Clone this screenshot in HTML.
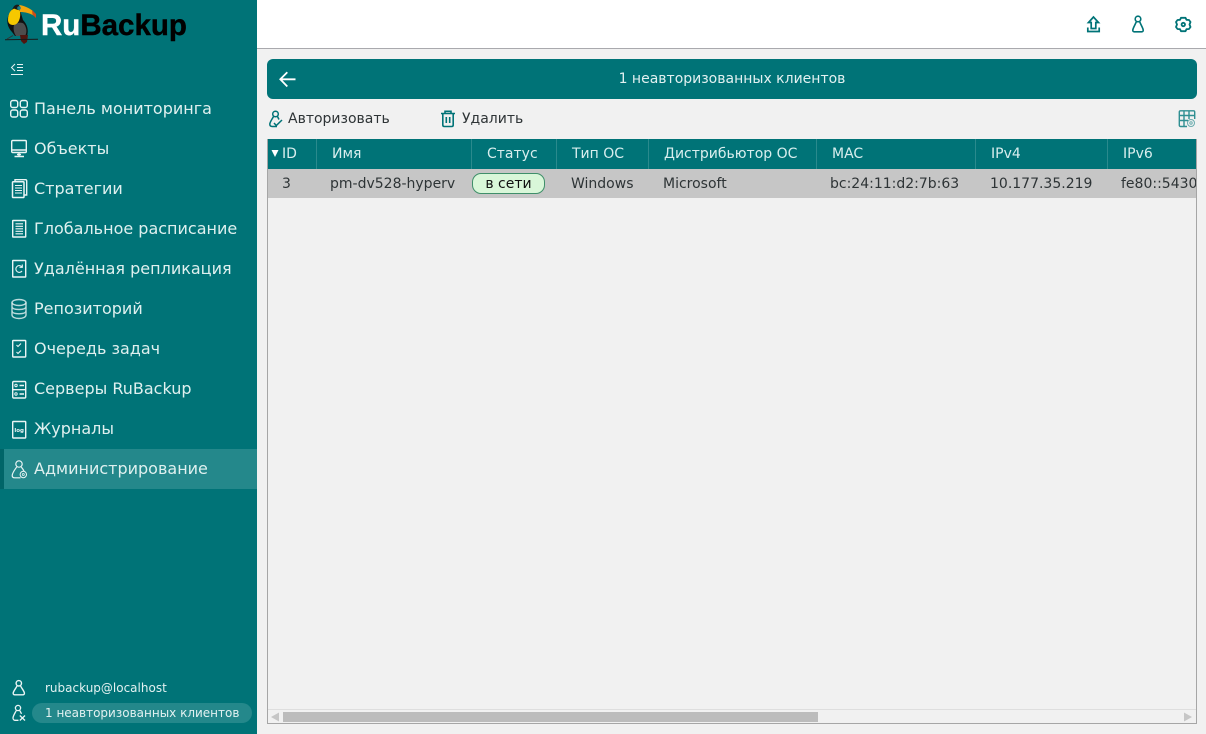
<!DOCTYPE html>
<html><head><meta charset="utf-8">
<style>
*{box-sizing:border-box}
html,body{margin:0;padding:0;width:1206px;height:734px;overflow:hidden;background:#f1f1f1;font-family:"DejaVu Sans",sans-serif}
.a{position:absolute;white-space:nowrap}
#side{position:absolute;left:0;top:0;width:257px;height:734px;background:#007377}
.mi{position:absolute;left:34px;color:#dff0ef;font-size:16px;line-height:20px;white-space:nowrap}
.ic{position:absolute;left:10px;width:18px;height:20px;fill:none;stroke:#eaf5f5;stroke-width:1.4}
.th{position:absolute;top:146px;color:#d8eeee;font-size:14px;line-height:16px;white-space:nowrap}
.td{position:absolute;top:176px;color:#2e3436;font-size:14px;line-height:16px;white-space:nowrap}
.sep{position:absolute;top:139px;width:1px;height:30px;background:#2a8a8d}
svg{position:absolute;overflow:visible}
</style></head><body>
<div id="side">
<svg style="left:0;top:0" width="40" height="46" viewBox="0 0 40 46">
<path d="M9 14C6 20 7 27 12 32L15 36 27 36C29 30 27 24 23 20L20 10 13 8Z" fill="#111"/>
<path d="M14 25C18 22 22 22 24 24C27 28 27 33 25 36H16C14 33 13 29 14 25Z" fill="#4d4d4d"/>
<path d="M8 20C8 13 11 9 16 8L20 11C21 17 19 25 13 25C10 25 8 23 8 20Z" fill="#f6c800"/>
<path d="M18 5C23 5 29 8 33 11L36 17C30 13 25 12 20 12Z" fill="#f2a60c"/>
<path d="M32 10L36 14 36 18 32.500 14.500Z" fill="#cf4a18"/>
<path d="M13 8C14 5 17 4 19 5L20 7 18 10 15 9Z" fill="#1a1a1a"/>
<circle cx="19" cy="8" r="1.800" fill="#1c7f8a"/>
<path d="M20 35H28L27 42 24 44 21 41Z" fill="#4f1610"/>
<path d="M5 39.700L38 39.200" stroke="#1a1a1a" stroke-width="1" fill="none"/>
<path d="M7 39L13 35.500" stroke="#333" stroke-width="1" fill="none"/>
</svg>
<div class="a" style="left:41px;top:7px;font:bold 29.5px/38px 'Liberation Sans',sans-serif;color:#fff;-webkit-text-stroke:.4px #fff">Ru<span style="color:#000;-webkit-text-stroke:.4px #000">Backup</span></div>
<svg style="left:10px;top:62px" width="14" height="14" fill="none" stroke="#e6f3f3" stroke-width="1"><path d="M5 2L1.500 5.500 5 9M7 2.500H13M7 5.500H13M7 8.500H13M1 12.500H13"/></svg>

<svg class="ic" style="top:99px"><rect x=".7" y="1.500" width="7" height="7" rx="2"/><rect x="10.300" y="1.500" width="7" height="7" rx="2"/><rect x=".7" y="11" width="7" height="7" rx="2"/><rect x="10.300" y="11" width="7" height="7" rx="2"/></svg>
<div class="mi" style="top:99px">Панель мониторинга</div>
<svg class="ic" style="top:139px"><rect x="1.700" y="1.500" width="14.600" height="12" rx="1"/><path d="M1.700 11H16.300M9 13.500V17M4.500 17.500H14M7 15.500H11"/></svg>
<div class="mi" style="top:139px">Объекты</div>
<svg class="ic" style="top:179px"><path d="M5 2V.7H15.500C16.300 .7 16.700 1.200 16.700 2V16H14.500"/><rect x="2.500" y="2.700" width="11.500" height="15.800" rx=".8" stroke-width="1.500"/><path d="M5 6.500H12M5 9H12M5 11.500H12M5 14H12" stroke-width="1.100"/></svg>
<div class="mi" style="top:179px">Стратегии</div>
<svg class="ic" style="top:219px"><rect x="2.700" y="1.500" width="13" height="16.500" rx=".3"/><path d="M5.500 4.800H13M5.500 7.300H13M5.500 9.800H13M5.500 12.300H13M5.500 14.800H13" stroke-width="1.100"/></svg>
<div class="mi" style="top:219px">Глобальное расписание</div>
<svg class="ic" style="top:259px"><rect x="2.700" y="1.500" width="13" height="16.500" rx=".3"/><path d="M12 8A3.400 3.400 0 1 0 12 12M12.300 5.500V8.300H9.500" stroke-width="1.100"/></svg>
<div class="mi" style="top:259px">Удалённая репликация</div>
<svg class="ic" style="top:299px" stroke-opacity=".8"><ellipse cx="9" cy="3.500" rx="7" ry="3"/><path d="M2 3.500V16C2 18 5 19.500 9 19.500S16 18 16 16V3.500M2 7.500C2 9.500 5 10.500 9 10.500S16 9.500 16 7.500M2 11.800C2 13.800 5 14.800 9 14.800S16 13.800 16 11.800"/></svg>
<div class="mi" style="top:299px">Репозиторий</div>
<svg class="ic" style="top:339px"><rect x="2.700" y="1.500" width="13" height="16.500" rx=".5"/><path d="M6.500 6L8 7.500 11 4.500M6.500 13L8 14.500 11 11.500" stroke-width="1.100"/></svg>
<div class="mi" style="top:339px">Очередь задач</div>
<svg class="ic" style="top:380px"><rect x="2.700" y="1.500" width="13" height="16.500" rx="1"/><path d="M2.700 9.700H15.700M9.500 5.500H14M9.500 14H14"/><circle cx="6" cy="5.500" r="1.200" stroke-width="1"/><circle cx="6" cy="14" r="1.200" stroke-width="1"/></svg>
<div class="mi" style="top:379px">Серверы RuBackup</div>
<svg class="ic" style="top:420px"><rect x="2.700" y="1.500" width="13" height="16.500" rx=".5"/><text x="9.200" y="12" text-anchor="middle" font-family="DejaVu Sans" font-weight="bold" font-size="5.500" fill="#eaf5f5" stroke="none">log</text></svg>
<div class="mi" style="top:419px">Журналы</div>
<div class="a" style="left:0;top:449px;width:257px;height:40px;background:#24888b"></div>
<div class="a" style="left:0;top:449px;width:4px;height:40px;background:#006568"></div>
<svg class="ic" style="top:459px;stroke-width:1.200"><circle cx="9" cy="5" r="3.200"/><path d="M6.700 8C4.500 11 2.200 14 2.200 16.500C2.200 18 3.200 18.800 4.700 18.800H10.500M11.300 8C12.300 9.300 13.200 10.500 14 12"/><circle cx="13.300" cy="15.500" r="3.200" stroke-width="1"/><circle cx="13.300" cy="15.500" r="1" stroke-width=".8"/></svg>
<div class="mi" style="top:459px">Администрирование</div>

<svg style="left:12px;top:680px" width="14" height="16" fill="none" stroke="#eaf5f5" stroke-width="1.400"><circle cx="6.800" cy="3.300" r="2.700"/><path d="M5 6C3.800 8.500 1.500 11 1.200 13C1 14.300 1.800 14.800 2.800 14.800H10.800C11.800 14.800 12.600 14.300 12.400 13C12.100 11 9.800 8.500 8.600 6"/></svg>
<div class="a" style="left:45px;top:680px;color:#e2f1f1;font-size:12px;line-height:16px">rubackup@localhost</div>
<svg style="left:12px;top:705px" width="14" height="17" fill="none" stroke="#eaf5f5" stroke-width="1.300"><circle cx="6" cy="3" r="2.600"/><path d="M4.300 5.500C3 8 1 11 1 13C1 14.500 2 15.300 3 15.300H6.500M7.800 5.500C8.300 6.500 8.900 7.500 9.500 8.800M7.800 10.500L13 15.500M13 10.500L7.800 15.500"/></svg>
<div class="a" style="left:32px;top:703px;width:220px;height:20px;border-radius:10px;background:#24888b"></div>
<div class="a" style="left:45px;top:705px;color:#e2f1f1;font-size:12px;line-height:16px">1 неавторизованных клиентов</div>
</div>

<div class="a" style="left:257px;top:0;width:949px;height:49px;background:#fff;border-bottom:1px solid #a9a9ad"></div>
<svg style="left:1085px;top:15px" width="18" height="20" fill="none" stroke="#007377" stroke-width="1.700"><path d="M8.500 2L3.500 7.500H6.200V13.500H10.800V7.500H13.500Z"/><path d="M2.800 12.500V16.500H14.200V12.500"/></svg>
<svg style="left:1130px;top:15px" width="16" height="20" fill="none" stroke="#007377" stroke-width="1.600"><circle cx="8" cy="4" r="2.800"/><path d="M6.300 6.800C5 10 3 13 2.800 15C2.700 16.300 3.300 16.800 4.300 16.800H11.700C12.700 16.800 13.300 16.300 13.200 15C13 13 11 10 9.700 6.800"/></svg>
<svg style="left:1175px;top:15px" width="17" height="20" fill="none" stroke="#007377" stroke-width="1.800"><path d="M6 2.800H10.500L11.500 4.800 14 5 15.500 7 14.500 9.500 15.500 12 14 14 11.500 14.200 10.500 16.200H6L5 14.200 2.500 14 1 12 2 9.500 1 7 2.500 5 5 4.800Z" stroke-linejoin="round"/><circle cx="8.300" cy="9.500" r="1.700"/></svg>

<div class="a" style="left:267px;top:59px;width:930px;height:40px;background:#007377;border-radius:6px"></div>
<svg style="left:278px;top:70px" width="20" height="18" fill="none" stroke="#fff" stroke-width="1.800"><path d="M9.300 2.300L2.300 9.300 9.300 16.500M2.500 9.300H17.500"/></svg>
<div class="a" style="left:267px;top:71px;width:930px;text-align:center;color:#e2f1f1;font-size:14px;line-height:16px">1 неавторизованных клиентов</div>

<svg style="left:268px;top:110px" width="16" height="18" fill="none" stroke="#007377" stroke-width="1.500"><circle cx="7.500" cy="4" r="2.800"/><path d="M5.500 6.500C4 9.500 1.800 12 1.800 14.300C1.800 15.800 2.800 16.500 4.300 16.500H9M9.500 6.500C10 7.500 10.500 8.500 11 9.500M6 13L8.300 15.500 14 10"/></svg>
<div class="a" style="left:288px;top:111px;color:#2e3436;font-size:14px;line-height:17px">Авторизовать</div>
<svg style="left:440px;top:110px" width="16" height="18" fill="none" stroke="#007377" stroke-width="1.600"><path d="M1 3.500H15M5 3.500V1.300H11V3.500M2.800 3.500V15C2.800 16 3.300 16.500 4.300 16.500H11.700C12.700 16.500 13.200 16 13.200 15V3.500M6.300 7V13M9.700 7V13"/></svg>
<div class="a" style="left:462px;top:111px;color:#2e3436;font-size:14px;line-height:17px">Удалить</div>
<svg style="left:1178px;top:110px" width="18" height="18" fill="none" stroke="#2f8f92" stroke-width="1.400"><path d="M9 16.500H2.500C1.700 16.500 1.300 16 1.300 15.300V2C1.300 1.200 1.700 .8 2.500 .8H15.500C16.200 .8 16.700 1.200 16.700 2V9M1.300 5.500H16.700M1.300 10.500H10M6 .8V16.500M11 .8V9"/><circle cx="13" cy="13" r="3.500" stroke-width="1" stroke-opacity=".7"/><circle cx="13" cy="13" r="1.200" stroke-width="1" stroke-opacity=".7"/></svg>

<div class="a" style="left:267px;top:139px;width:930px;height:585px;border:1px solid #a6a6a6;border-top:0"></div>
<div class="a" style="left:268px;top:139px;width:928px;height:30px;background:#007377"></div>
<div class="a" style="left:268px;top:169px;width:928px;height:29px;background:#c6c6c6"></div>
<div class="sep" style="left:316px"></div><div class="sep" style="left:471px"></div><div class="sep" style="left:556px"></div><div class="sep" style="left:648px"></div><div class="sep" style="left:816px"></div><div class="sep" style="left:975px"></div><div class="sep" style="left:1107px"></div>
<svg style="left:271px;top:150px" width="9" height="8"><path d="M.5 0H7.500L4 7Z" fill="#fff"/></svg>
<div class="th" style="left:282px">ID</div>
<div class="th" style="left:332px">Имя</div>
<div class="th" style="left:487px">Статус</div>
<div class="th" style="left:572px">Тип ОС</div>
<div class="th" style="left:664px">Дистрибьютор ОС</div>
<div class="th" style="left:832px">MAC</div>
<div class="th" style="left:991px">IPv4</div>
<div class="th" style="left:1123px">IPv6</div>

<div class="td" style="left:282px">3</div>
<div class="td" style="left:330px">pm-dv528-hyperv</div>
<div class="a" style="left:472px;top:173px;width:73px;height:21px;border-radius:9px;background:#d9f7d9;border:1px solid #3f8f6a;color:#111;font-size:14px;line-height:20px;text-align:center">в сети</div>
<div class="td" style="left:571px">Windows</div>
<div class="td" style="left:663px">Microsoft</div>
<div class="td" style="left:830px">bc:24:11:d2:7b:63</div>
<div class="td" style="left:990px">10.177.35.219</div>
<div class="a" style="left:1121px;top:176px;width:75px;overflow:hidden;color:#2e3436;font-size:14px;line-height:16px">fe80::5430:1</div>

<div class="a" style="left:268px;top:709px;width:928px;height:14px;background:#f1f1f1;border-top:1px solid #dedede"></div>
<div class="a" style="left:283px;top:712px;width:535px;height:10px;background:#bcbcbc"></div>
<svg style="left:271px;top:711px" width="10" height="12"><path d="M0 6L8 1.500V10.500Z" fill="#c6c6c6"/></svg>
<svg style="left:1184px;top:711px" width="10" height="12"><path d="M8 6L0 1.500V10.500Z" fill="#c6c6c6"/></svg>
</body></html>
